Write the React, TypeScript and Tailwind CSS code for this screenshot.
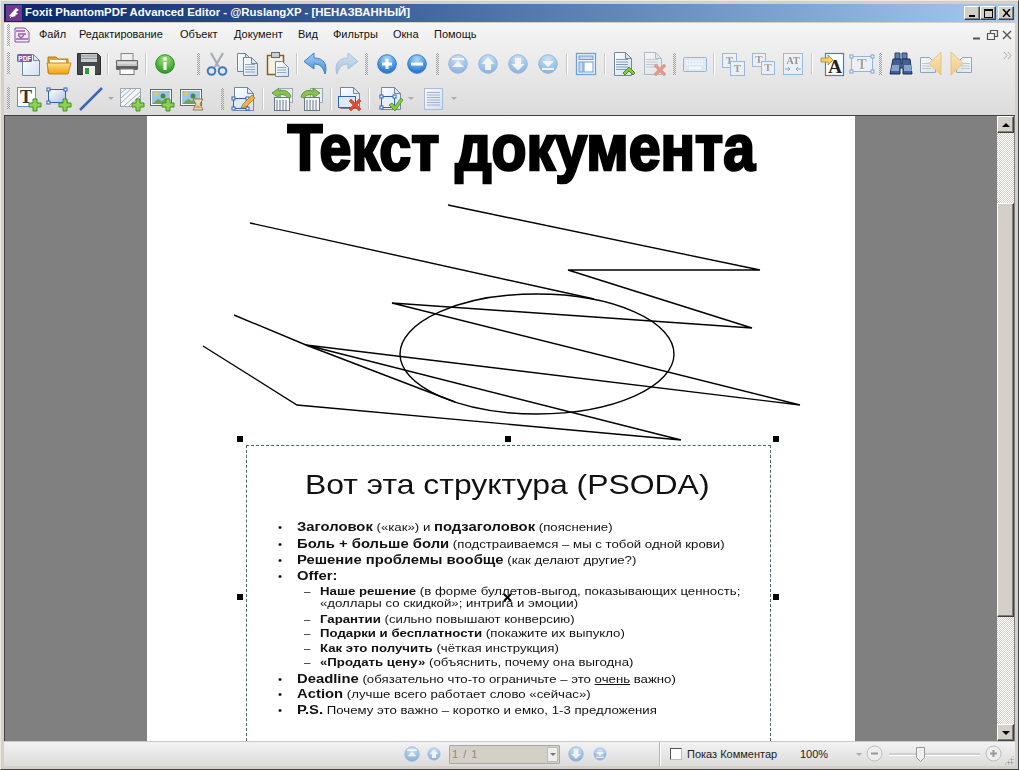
import React from "react";

const Defs = () => (
  <svg className="absolute w-0 h-0" aria-hidden="true">
    <defs>
      <radialGradient id="ball" cx="50%" cy="25%" r="80%"><stop offset="0" stopColor="#b5dcfb" /><stop offset="0.55" stopColor="#4d9be8" /><stop offset="1" stopColor="#1c62c4" /></radialGradient>
      <radialGradient id="gball" cx="50%" cy="25%" r="80%"><stop offset="0" stopColor="#a8e08a" /><stop offset="0.6" stopColor="#4fb33c" /><stop offset="1" stopColor="#2c8a24" /></radialGradient>
      <linearGradient id="page" x1="0" y1="0" x2="1" y2="1"><stop offset="0" stopColor="#ffffff" /><stop offset="1" stopColor="#cfe0f2" /></linearGradient>
      <linearGradient id="folder" x1="0" y1="0" x2="0" y2="1"><stop offset="0" stopColor="#ffe083" /><stop offset="1" stopColor="#ee9f12" /></linearGradient>
      <linearGradient id="arrow" x1="0" y1="0" x2="0" y2="1"><stop offset="0" stopColor="#a9d3f7" /><stop offset="1" stopColor="#3d86d6" /></linearGradient>
      <linearGradient id="rectf" x1="0" y1="0" x2="1" y2="1"><stop offset="0" stopColor="#ffffff" /><stop offset="1" stopColor="#a9c4e6" /></linearGradient>
      <linearGradient id="tri" x1="0" y1="0" x2="0" y2="1"><stop offset="0" stopColor="#fde6a8" /><stop offset="1" stopColor="#f2bd55" /></linearGradient>
    </defs>
  </svg>
);

type P = { children: React.ReactNode; w?: number; o?: string };
const S = ({ children, o = "" }: P) => (
  <svg width="26" height="26" viewBox="0 0 26 26" fill="none" className={o}>{children}</svg>
);

const DocShape = ({ x = 4, y = 2, w = 16, h = 21 }: { x?: number; y?: number; w?: number; h?: number }) => (
  <path d={`M${x + .5} ${y + .5}h${w - 6}l6 6v${h - 6}h-${w}z`} fill="url(#page)" stroke="#77879a" />
);
const Fold = ({ x = 4, y = 2, w = 16 }: { x?: number; y?: number; w?: number }) => (
  <path d={`M${x + w - 5.5} ${y + .5}v6h6z`} fill="#dfe6ee" stroke="#77879a" />
);
const Lines = ({ x = 7, y = 9, n = 5, w = 10, c = "#7f9cc0" }: { x?: number; y?: number; n?: number; w?: number; c?: string }) => (
  <g stroke={c}>
    {Array.from({ length: n }).map((_, i) => <path key={i} d={`M${x} ${y + i * 2.5 + .5}h${w}`} />)}
  </g>
);
const PlusG = ({ x = 18, y = 18 }: { x?: number; y?: number }) => (
  <path d={`M${x - 2} ${y - 6}h4v4h4v4h-4v4h-4v-4h-4v-4h4z`} fill="#8fd04f" stroke="#3f8f2a" />
);
const Ball = ({ g, faded }: { g: "plus" | "minus" | "first" | "up" | "down" | "last"; faded?: boolean }) => (
  <S o={faded ? "opacity-45" : ""}>
    <circle cx="13" cy="13" r="9.3" fill="url(#ball)" stroke="#3a7fd0" />
    {g === "plus" && <path d="M8 11.5h3.5V8h3v3.5H18v3h-3.5V18h-3v-3.5H8z" fill="#fff" />}
    {g === "minus" && <rect x="7" y="11.5" width="12" height="3" fill="#fff" />}
    {g === "first" && <path d="M7 7h12v2H7zM13 10l6 6H7z" fill="#fff" />}
    {g === "last" && <path d="M7 17h12v2H7zM13 16l-6-6h12z" fill="#fff" />}
    {g === "up" && <path d="M13 6.5l6.5 6.5H16v6h-6v-6H6.500z" fill="#fff" />}
    {g === "down" && <path d="M13 19.500L6.500 13H10V7h6v6h3.500z" fill="#fff" />}
  </S>
);

const NewPdf = () => (
  <svg width="26" height="26" viewBox="0 0 26 26" fill="none">
    <DocShape x={6} y={3} w={17} h={21} /><Fold x={6} y={3} w={17} />
    <rect x="1" y="3" width="15" height="8" rx="1.500" fill="#8a55a8" />
    <text x="2.300" y="9.500" fontSize="6.500" fontWeight="700" fill="#fff" fontFamily="Liberation Sans">PDF</text>
  </svg>
);
const Folder = () => (
  <S><path d="M2 6h8l2 2h10v14H2z" fill="#e9a321" stroke="#b97c10" /><path d="M4 9h16v4H4z" fill="#fff" /><path d="M1 12h24l-3 11H3z" fill="url(#folder)" stroke="#c58a15" /></S>
);
const Floppy = () => (
  <S><path d="M1.500 2.500h20l3 3v18h-23z" fill="#44484b" stroke="#2a2d30" /><rect x="5" y="3" width="16" height="8" fill="#c9ccce" /><path d="M5 5h16M5 7.500h16" stroke="#8f9599" /><rect x="7" y="15" width="12" height="9" fill="#eeeeea" /><rect x="9" y="17" width="4" height="6" fill="#2f9a3a" /></S>
);
const Printer = () => (
  <S><rect x="7" y="2.500" width="12" height="7" fill="#eef0f0" stroke="#888" /><path d="M2.500 9.500h21v9h-21z" fill="#c4c7c7" stroke="#666" /><rect x="3" y="15" width="20" height="3" fill="#5c6063" /><rect x="6" y="18" width="14" height="5.500" fill="#fff" stroke="#777" /><path d="M4 12h18" stroke="#eee" /></S>
);
const Info = () => (
  <S><circle cx="13" cy="13" r="9.300" fill="url(#gball)" stroke="#2f8a25" /><rect x="11.500" y="6.500" width="3" height="3" fill="#fff" /><rect x="11.500" y="11" width="3" height="8" fill="#fff" /></S>
);
const Scissors = () => (
  <svg width="26" height="26" viewBox="0 0 26 26" fill="none">
    <path d="M7 2l8 14M19 2L11 16" stroke="#a7adb4" strokeWidth="2.200" />
    <circle cx="7.500" cy="20" r="3.800" stroke="#3b7ac4" strokeWidth="2" /><circle cx="18.500" cy="20" r="3.800" stroke="#3b7ac4" strokeWidth="2" />
  </svg>
);
const Copy = () => (
  <S><DocShape x={3} y={2} w={14} h={18} /><Fold x={3} y={2} w={14} /><DocShape x={9} y={6} w={14} h={18} /><Fold x={9} y={6} w={14} /><Lines x={11} y={13} n={4} w={10} c="#93a7bd" /></S>
);
const Paste = () => (
  <S><rect x="3.500" y="4.500" width="16" height="19" fill="#f4f0e6" stroke="#8a5f1e" strokeWidth="1.500" /><rect x="7.500" y="1.500" width="8" height="5" fill="#c9ced2" stroke="#667" /><DocShape x={11} y={10} w={13} h={15} /><Lines x={13} y={16} n={3} w={9} c="#93a7bd" /></S>
);
const Undo = ({ flip, faded }: { flip?: boolean; faded?: boolean }) => (
  <S o={`${flip ? "-scale-x-100" : ""} ${faded ? "opacity-40" : ""}`}>
    <path d="M11 2L1 10.500 11 18v-5c6 0 9 3 11 10 3-9-1-16-11-16z" fill="url(#arrow)" stroke="#3e7fc7" />
  </S>
);
const Panel = () => (
  <S><rect x="3.500" y="2.500" width="19" height="21" fill="#f0f5fb" stroke="#6f9fd6" strokeWidth="1.300" /><rect x="6" y="5" width="14" height="3.500" fill="#c6d9ef" stroke="#6f9fd6" /><rect x="6" y="11" width="4" height="10" fill="#c6d9ef" stroke="#6f9fd6" /><rect x="11" y="11" width="9" height="10" fill="#fff" stroke="#6f9fd6" /></S>
);
const DocUp = () => (
  <S><DocShape x={3} y={1} w={17} h={23} /><Fold x={3} y={1} w={17} /><Lines x={5} y={8} n={5} w={12} /><path d="M12 22l6-6 6 6-2 2-4-4-4 4z" fill="#86c53f" stroke="#4e932a" /></S>
);
const RedX = ({ x = 18, y = 18 }: { x?: number; y?: number }) => (
  <path d={`M${x - 6} ${y - 4}l2-2 4 4 4-4 2 2-4 4 4 4-2 2-4-4-4 4-2-2 4-4z`} fill="#e64a2a" stroke="#b9300f" strokeWidth=".5" />
);
const DocX = () => (
  <S o="opacity-50"><DocShape x={3} y={1} w={17} h={22} /><Fold x={3} y={1} w={17} /><Lines x={5} y={8} n={4} w={12} c="#a0a8b4" /><RedX x={19} y={19} /></S>
);
const Keyboard = () => (
  <S o="opacity-70"><rect x="1.500" y="6.500" width="23" height="14" rx="1" fill="#dde8f4" stroke="#6f9fd6" /><path d="M4 10h18M4 13h18" stroke="#fff" strokeWidth="1.500" strokeDasharray="2 1" /><path d="M7 17h12" stroke="#fff" strokeWidth="2" /></S>
);
const TBox = ({ x, y, s = 14 }: { x: number; y: number; s?: number }) => (
  <g><rect x={x + .5} y={y + .5} width={s} height={s} fill="#eef3fa" stroke="#6f9fd6" />
    <text x={x + s / 2 + .5} y={y + s - 3} textAnchor="middle" fontSize="11" fontWeight="700" fill="#777" fontFamily="Liberation Serif">T</text></g>
);
const TT = () => (
  <S o="opacity-65"><TBox x={2} y={2} /><TBox x={10} y={10} /></S>
);
const TT2 = () => (
  <S o="opacity-65"><TBox x={2} y={2} s={13} /><TBox x={11} y={10} s={13} /></S>
);
const AT = () => (
  <S o="opacity-65"><rect x="3.500" y="2.500" width="19" height="21" fill="#eef3fa" stroke="#6f9fd6" />
    <text x="13" y="13" textAnchor="middle" fontSize="10" fontWeight="700" fill="#666" fontFamily="Liberation Serif">AT</text>
    <path d="M5 18h5M8 16l2 2-2 2M21 18h-5M18 16l-2 2 2 2" stroke="#4d86c9" /></S>
);
const AHi = () => (
  <svg width="26" height="26" viewBox="0 0 26 26" fill="none">
    <rect x="5.500" y="2.500" width="18" height="22" fill="#fff" stroke="#3d7fd0" strokeWidth="1.200" />
    <text x="15" y="22" textAnchor="middle" fontSize="19" fontWeight="700" fill="#222" fontFamily="Liberation Serif">A</text>
    <path d="M1 7h7V4l5 5-5 5v-3H1z" fill="#f6cf6a" stroke="#a8802c" strokeWidth=".8" />
  </svg>
);
const Handles = ({ pts, c = "#4d86c9" }: { pts: number[][]; c?: string }) => (
  <g>{pts.map((p, i) => <rect key={i} x={p[0] - 1.500} y={p[1] - 1.500} width="3" height="3" fill="#fff" stroke={c} />)}</g>
);
const TFrame = () => (
  <S o="opacity-70"><rect x="2.500" y="5.500" width="21" height="15" fill="#eef3fa" stroke="#6f9fd6" />
    <text x="13" y="18" textAnchor="middle" fontSize="14" fontWeight="700" fill="#888" fontFamily="Liberation Serif">T</text>
    <Handles pts={[[2.500, 5.500], [23.500, 5.500], [2.500, 20.500], [23.500, 20.500]]} /></S>
);
const Binoculars = () => (
  <S><path d="M7 2h5v6H7zM14 2h5v6h-5z" fill="#5f7fb0" stroke="#2c3f66" /><path d="M5 8h8v5h1V8h8l2 15h-9v-6h-3v6H2z" fill="#3f5f95" stroke="#1f2f55" /><path d="M4 14h7v6H3zM16 14h7l1 6h-8z" fill="#86a3cf" /></S>
);
const NavTri = ({ right }: { right?: boolean }) => (
  <S o={right ? "-scale-x-100 opacity-70" : "opacity-70"}><DocShape x={2} y={6} w={15} h={15} /><Lines x={4} y={12} n={3} w={9} c="#b0b8c4" /><path d="M23 1v23L11 12.500z" fill="url(#tri)" stroke="#e4b25d" /></S>
);
const TPlus = () => (
  <S><rect x="1.500" y="1.500" width="18" height="19" fill="#fff" stroke="#5d90cc" /><text x="10" y="17" textAnchor="middle" fontSize="18" fontWeight="700" fill="#333" fontFamily="Liberation Serif">T</text><PlusG x={19} y={19} /></S>
);
const RectPlus = () => (
  <S><rect x="2.500" y="3.500" width="17" height="13" fill="url(#rectf)" stroke="#2e62b4" /><Handles pts={[[2.500, 3.500], [19.500, 3.500], [2.500, 16.500], [19.500, 16.500]]} c="#2e62b4" /><PlusG x={19} y={19} /></S>
);
const LineI = () => (
  <S><path d="M2 24L24 2" stroke="#3a66b8" strokeWidth="2.500" /></S>
);
const HatchPlus = () => (
  <S><rect x="1.500" y="2.500" width="20" height="18" fill="#f3f5f8" stroke="#9aa8b8" /><path d="M2 7l5-4M2 12l10-9M2 17L17 3M5 20L21 6M10 20L21 10M15 20l6-5" stroke="#a5adb8" /><PlusG x={19} y={19} /></S>
);
const Pic = () => (
  <g><rect x="1.500" y="3.500" width="21" height="16" fill="#fff" stroke="#666" /><rect x="3" y="5" width="18" height="13" fill="#9cc5ee" /><path d="M3 18l6-5 4 2 4-3 4 3v3z" fill="#6aa84b" /><circle cx="7" cy="8" r="2" fill="#f4c842" /><circle cx="14" cy="10" r="2.500" fill="#4b8a36" /></g>
);
const PicPlus = () => <S><Pic /><PlusG x={19} y={19} /></S>;
const PicHour = () => (
  <S><Pic /><path d="M14 13h10l-3 5 3 6H14l3-6z" fill="#e8dcc0" stroke="#8a7a55" /><path d="M16 22h6l-3-3z" fill="#d9a13a" /></S>
);
const EditDoc = () => (
  <S><DocShape x={3} y={1} w={19} h={23} /><Fold x={3} y={1} w={19} /><rect x="2.500" y="12.500" width="14" height="10" fill="#dfeaf7" stroke="#2e62b4" /><Handles pts={[[2.500, 12.500], [16.500, 12.500], [2.500, 22.500], [16.500, 22.500]]} c="#2e62b4" /><path d="M10 22l2-4 9-9 3 3-9 9z" fill="#f1b14a" stroke="#9a6a20" strokeWidth=".7" /></S>
);
const ArrowOver = ({ flip }: { flip?: boolean }) => (
  <S>
    <rect x="11.500" y="2.500" width="12" height="14" fill="#e8ecf0" stroke="#9aa8b8" />
    <rect x="5.500" y="11.500" width="15" height="13" fill="#f6f8fa" stroke="#68788a" />
    <path d="M8 14v10M11 14v10M14 14v10M17 14v10" stroke="#68788a" />
    <path d={flip ? "M2 11c1-5 6-8 12-6V2l7 5-7 5V9c-4-1-7 0-9 3z" : "M22 11C21 6 16 3 10 5V2L3 7l7 5V9c4-1 7 0 9 3z"} fill="#8cc152" stroke="#4e8d28" strokeWidth=".8" />
  </S>
);
const DocRectX = () => (
  <S><DocShape x={3} y={1} w={19} h={21} /><Fold x={3} y={1} w={19} /><rect x="1.500" y="10.500" width="17" height="11" fill="#dfeaf7" stroke="#2e62b4" /><RedX x={18} y={19} /></S>
);
const DocCheck = () => (
  <S><DocShape x={3} y={1} w={19} h={22} /><Fold x={3} y={1} w={19} /><rect x="3.500" y="10.500" width="13" height="11" fill="#e6eef8" stroke="#2e62b4" /><Handles pts={[[3.500, 10.500], [16.500, 10.500], [3.500, 21.500], [16.500, 21.500]]} c="#2e62b4" /><path d="M11 19l3-2 3 3 6-8 2 2-8 11z" fill="#8cc83f" stroke="#4d8f25" strokeWidth=".8" /></S>
);
const LinesDoc = () => (
  <S o="opacity-80"><rect x="3.500" y="2.500" width="18" height="21" fill="url(#page)" stroke="#9db4d4" /><Lines x={6} y={6} n={6} w={13} c="#8fa8cc" /></S>
);

const Btn = ({ children }: { children: React.ReactNode }) => (
  <div className="w-[30px] h-[26px] flex items-center justify-center shrink-0">{children}</div>
);
const Sep = () => (
  <div className="w-[8px] flex justify-center shrink-0"><div className="w-[2px] h-[22px] bg-[#c9c9c9] border-r border-white" /></div>
);
const Grip = ({ cls = "w-[11px]" }: { cls?: string }) => (
  <div className={`${cls} flex justify-center shrink-0`}>
    <div className="w-[3px] h-[22px] bg-[repeating-conic-gradient(#a2a2a2_0_25%,transparent_0_50%)] bg-[length:2px_2px]" />
  </div>
);
const Dd = ({ cls = "w-[10px]" }: { cls?: string }) => (
  <div className={`${cls} flex justify-center shrink-0`}>
    <div className="w-0 h-0 border-x-[3px] border-x-transparent border-t-[3px] border-t-[#aaa]" />
  </div>
);

const Menu = () => {
  const items: [string, string][] = [["Файл", "w-[40px]"], ["Редактирование", "w-[101px]"], ["Объект", "w-[54px]"], ["Документ", "w-[64px]"], ["Вид", "w-[35px]"], ["Фильтры", "w-[60px]"], ["Окна", "w-[41px]"], ["Помощь", "w-[50px]"]];
  return (
    <div className="h-[23px] flex items-center pl-[3px] pr-[2px]">
      <Grip cls="w-[3px]" />
      <div className="w-[29px] flex justify-start pl-[4px] shrink-0">
        <svg width="16" height="16" viewBox="0 0 16 16" fill="none">
          <path d="M1 1h10l4 4v10H1z" fill="#f3e6f5" stroke="#8a4ea0" /><path d="M2 4h9M2 12h12M4 7h8" stroke="#9b5fb0" strokeWidth="1.500" /><path d="M4 8l3 3 3-3" stroke="#9b5fb0" strokeWidth="1.500" />
        </svg>
      </div>
      {items.map(([t, c]) => <div key={t} className={`${c} shrink-0 text-[11px] text-[#111] font-['Liberation_Sans',sans-serif]`}>{t}</div>)}
      <div className="ml-auto flex items-center gap-[6px]">
        <svg width="40" height="12" viewBox="0 0 40 12" fill="none" stroke="#555">
          <path d="M0 9.500h7" strokeWidth="2" />
          <path d="M14.500 4.500h7v6h-7zM17.500 4.500v-3h7v6h-3" strokeWidth="1.200" />
          <path d="M30 2l8 8M38 2l-8 8" strokeWidth="1.400" />
        </svg>
      </div>
    </div>
  );
};

const Toolbar1 = () => (
  <div className="h-[36px] flex items-center pl-[10px] relative">
    <div className="absolute left-[3px] top-[6px]"><Grip cls="w-[3px]" /></div>
    <Btn><NewPdf /></Btn><Btn><Folder /></Btn><Btn><Floppy /></Btn><Sep /><Btn><Printer /></Btn><Sep /><Btn><Info /></Btn>
    <div className="w-[14px] shrink-0" /><Grip cls="w-[8px]" />
    <Btn><Scissors /></Btn><Btn><Copy /></Btn><Btn><Paste /></Btn><div className="ml-[1px]"><Sep /></div><Btn><Undo /></Btn><Btn><Undo flip faded /></Btn><Grip />
    <Btn><Ball g="plus" /></Btn><Btn><Ball g="minus" /></Btn><Grip />
    <Btn><Ball g="first" faded /></Btn><Btn><Ball g="up" faded /></Btn><Btn><Ball g="down" faded /></Btn><Btn><Ball g="last" faded /></Btn><Sep />
    <Btn><Panel /></Btn><Sep /><Btn><DocUp /></Btn><Btn><DocX /></Btn><Grip />
    <Btn><Keyboard /></Btn><Sep /><Btn><TT /></Btn><Btn><TT2 /></Btn><Btn><AT /></Btn><Sep />
    <div className="ml-[2px]"><Btn><AHi /></Btn></div>
    <div className="w-[27px] flex justify-center shrink-0"><TFrame /></div><Grip />
    <Btn><Binoculars /></Btn><Btn><NavTri /></Btn><Btn><NavTri right /></Btn>
    <svg className="absolute right-[3px] top-[6px]" width="9" height="7" viewBox="0 0 9 7" fill="none" stroke="#aaa"><path d="M1 0l3 3.500L1 7M5 0l3 3.500L5 7" /></svg>
  </div>
);

const Toolbar2 = () => (
  <div className="h-[33px] flex items-center pl-[10px] relative">
    <div className="absolute left-[3px] top-[5px]"><Grip cls="w-[3px]" /></div>
    <Btn><TPlus /></Btn><Btn><RectPlus /></Btn><div className="ml-[2px]"><Btn><LineI /></Btn></div><Dd cls="w-[10px]" />
    <div className="ml-[1px]"><Btn><HatchPlus /></Btn></div><Btn><PicPlus /></Btn><Btn><PicHour /></Btn>
    <Grip cls="w-[22px] pl-[8px]" />
    <Btn><EditDoc /></Btn><Sep />
    <Btn><ArrowOver /></Btn><Btn><ArrowOver flip /></Btn><Sep /><Btn><DocRectX /></Btn><Sep />
    <div className="ml-[3px]"><Btn><DocCheck /></Btn></div><Dd />
    <div className="ml-[3px]"><Btn><LinesDoc /></Btn></div><Dd />
  </div>
);

const Bevel = ({ children, cls = "" }: { children?: React.ReactNode; cls?: string }) => (
  <div className={`bg-[#d4d0c8] border border-t-white border-l-white border-r-[#404040] border-b-[#404040] shadow-[inset_-1px_-1px_0_#808080] flex items-center justify-center shrink-0 ${cls}`}>{children}</div>
);

const Scrollbar = () => (
  <div className="w-[17px] shrink-0 flex flex-col">
    <Bevel cls="h-[17px]"><div className="w-0 h-0 border-x-[4px] border-x-transparent border-b-[4px] border-b-black" /></Bevel>
    <div className="h-[70px] bg-[repeating-conic-gradient(#d4d0c8_0_25%,#ffffff_0_50%)] bg-[length:2px_2px]" />
    <Bevel cls="h-[414px]" />
    <div className="flex-1 bg-[repeating-conic-gradient(#d4d0c8_0_25%,#ffffff_0_50%)] bg-[length:2px_2px]" />
    <Bevel cls="h-[17px]"><div className="w-0 h-0 border-x-[4px] border-x-transparent border-t-[4px] border-t-black" /></Bevel>
  </div>
);

const H = ({ cls }: { cls: string }) => <div className={`absolute w-[6px] h-[6px] bg-black ${cls}`} />;

const rows: { k: "b" | "d"; h: string; c: React.ReactNode }[] = [
  { k: "b", h: "h-[17px]", c: <><b>Заголовок</b> («как») и <b>подзаголовок</b> (пояснение)</> },
  { k: "b", h: "h-[16px]", c: <><b>Боль + больше боли</b> (подстраиваемся – мы с тобой одной крови)</> },
  { k: "b", h: "h-[16px]", c: <><b>Решение проблемы вообще</b> (как делают другие?)</> },
  { k: "b", h: "h-[16px]", c: <b>Offer:</b> },
  { k: "d", h: "h-[16px] -mt-[1px]", c: <><b>Наше решение</b> (в форме буллетов-выгод, показывающих ценность;</> },
  { k: "d", h: "h-[12px] -mt-[2px]", c: <>«доллары со скидкой»; интрига и эмоции)</> },
  { k: "d", h: "h-[16px] mt-[2px]", c: <><b>Гарантии</b> (сильно повышают конверсию)</> },
  { k: "d", h: "h-[14px] -mt-[1px]", c: <><b>Подарки и бесплатности</b> (покажите их выпукло)</> },
  { k: "d", h: "h-[15px] mt-[1px]", c: <><b>Как это получить</b> (чёткая инструкция)</> },
  { k: "d", h: "h-[14px] -mt-[1px]", c: <><b>«Продать цену»</b> (объяснить, почему она выгодна)</> },
  { k: "b", h: "h-[16px] mt-[2px]", c: <><b>Deadline</b> (обязательно что-то ограничьте – это <u>очень</u> важно)</> },
  { k: "b", h: "h-[15px]", c: <><b>Action</b> (лучше всего работает слово «сейчас»)</> },
  { k: "b", h: "h-[17px]", c: <><b>P.S.</b> Почему это важно – коротко и емко, 1-3 предложения</> },
];

const Page = () => (
  <div className="w-[708px] h-full bg-white shrink-0 flex flex-col font-['Liberation_Sans',sans-serif] relative">
    <div className="h-[81px] shrink-0 flex justify-center">
      <div className="ml-[40px] text-[64px] leading-[64px] font-bold text-black whitespace-nowrap scale-x-[0.895] [-webkit-text-stroke:2.6px_black]">Текст документа</div>
    </div>
    <svg width="708" height="248" viewBox="147 197 708 248" fill="none" stroke="#000" strokeWidth="1.400" className="shrink-0">
      <path d="M448 205L760 270H568L752 328 392 303 800 405 306 345 681 440 297 405 203 346" />
      <path d="M250 223L594 299M234 315L306 345 455 402" />
      <ellipse cx="537" cy="354" rx="137" ry="60" />
    </svg>
    <div className="relative ml-[99px] w-[525px] flex-1 border-t border-x border-dashed border-[#456a66]">
      <H cls="-left-[10px] -top-[10px]" /><H cls="left-[258px] -top-[10px]" /><H cls="-right-[9px] -top-[10px]" />
      <H cls="-left-[10px] top-[148px]" /><H cls="-right-[9px] top-[148px]" />
      <div className="blur-[0.35px] text-[#111]">
        <div className="pt-[23px] pl-[58px] h-[72px] text-[28px] leading-[32px] whitespace-nowrap"><div className="origin-left scale-x-[1.14]">Вот эта структура (PSODA)</div></div>
        <div className="leading-[13px] whitespace-nowrap">
          {rows.map((r, i) => (
            <div key={i} className={`${r.h} flex items-center ${r.k === "b" ? "pl-[31px] text-[11.6px] [&_b]:text-[13px]" : "pl-[57px] text-[11.6px]"}`}>
              <div className={`${r.k === "b" ? "w-[19px]" : "w-[16px]"} shrink-0`}>{r.k === "b" ? "•" : i === 5 ? "" : "–"}</div>
              <div className="origin-left scale-x-[1.14]">{r.c}</div>
            </div>
          ))}
        </div>
      </div>
      <svg className="absolute left-[256px] top-[147px]" width="9" height="9" viewBox="0 0 9 9" stroke="#000" strokeWidth="2"><path d="M1 1l7 7M8 1L1 8" /></svg>
    </div>
  </div>
);

const Status = () => (
  <div className="h-[25px] shrink-0 bg-gradient-to-b from-[#f2f2f2] to-[#dcdcdc] border-t border-[#c8c8c8] flex items-center pl-[396px] text-[11px] text-[#222] font-['Liberation_Sans',sans-serif] relative">
    <div className="w-[26px] flex justify-center -mx-[1px] scale-[0.78]"><Ball g="first" faded /></div>
    <div className="w-[22px] flex justify-center -mx-[1px] scale-[0.78]"><Ball g="up" faded /></div>
    <div className="w-[111px] h-[19px] ml-[5px] bg-[#d4d0c8] border border-[#a8a8a8] flex items-center justify-between pl-[2px] text-[#888] shrink-0 rounded-[1px]">
      <span className="tracking-[1px]">1 / 1</span>
      <div className="w-[11px] h-[15px] mr-[1px] bg-[#eeeeee] border border-[#bbb] flex items-center justify-center"><div className="w-0 h-0 border-x-[3px] border-x-transparent border-t-[3px] border-t-[#777]" /></div>
    </div>
    <div className="w-[26px] flex justify-center ml-[3px] scale-[0.78]"><Ball g="down" faded /></div>
    <div className="w-[22px] flex justify-center scale-[0.78]"><Ball g="last" faded /></div>
    <div className="ml-[48px] w-[1px] h-[24px] bg-[#b5b5b5] border-r border-white box-content" />
    <div className="ml-[9px] w-[12px] h-[12px] bg-white border border-[#555] border-r-[#bbb] border-b-[#bbb]" />
    <div className="ml-[5px] w-[113px] whitespace-nowrap">Показ Комментар</div>
    <div className="w-[55px]">100%</div>
    <Dd cls="w-[8px]" />
    <svg width="18" height="18" viewBox="0 0 18 18" fill="none" className="ml-[3px]"><circle cx="8.500" cy="8.500" r="7.500" fill="#eee" stroke="#bbb" /><path d="M5 8.500h7" stroke="#999" strokeWidth="2" /></svg>
    <div className="ml-[5px] w-[91px] h-[3px] bg-[#cfcfcf] border-b border-white relative">
      <svg className="absolute left-[26px] -top-[6px]" width="11" height="16" viewBox="0 0 11 16" fill="none"><path d="M1.500 .5h8v10l-4 4-4-4z" fill="#f0f0f0" stroke="#999" /></svg>
    </div>
    <svg width="18" height="18" viewBox="0 0 18 18" fill="none" className="ml-[5px]"><circle cx="8.500" cy="8.500" r="7.500" fill="#eee" stroke="#bbb" /><path d="M5 8.500h7M8.500 5v7" stroke="#999" strokeWidth="2" /></svg>
    <div className="absolute right-[1px] bottom-[1px] w-[10px] h-[10px] bg-[radial-gradient(#999_45%,transparent_50%)] bg-[length:3px_3px] [clip-path:polygon(100%_0,100%_100%,0_100%)]" />
  </div>
);

export default function App() {
  return (
    <div className="w-[1019px] h-[770px] bg-[#d4d0c8] border border-t-[#ece9e1] border-l-[#ece9e1] border-r-[#404040] border-b-[#404040] p-[3px] flex flex-col relative font-['Liberation_Sans',sans-serif]">
      <Defs />
      <div className="h-[18px] shrink-0 bg-gradient-to-r from-[#0a246a] to-[#a6caf0] flex items-center pl-[2px] pr-[1px] text-white">
        <svg width="16" height="16" viewBox="0 0 16 16" className="shrink-0"><rect width="16" height="16" fill="#6d3a8e" /><path d="M3 11l7-8 3 2-3 2 2 2-3 1 1 1-4 1z" fill="#fff" /><path d="M4 13l2-2" stroke="#ddd" /></svg>
        <div className="ml-[3px] text-[11.400px] font-bold whitespace-nowrap font-['Liberation_Sans',sans-serif]">Foxit PhantomPDF Advanced Editor - @RuslangXP - [НЕНАЗВАННЫЙ]</div>
        <div className="ml-auto flex">
          <Bevel cls="w-[16px] h-[14px] items-end pb-[2px]"><div className="w-[6px] h-[2px] bg-black" /></Bevel>
          <Bevel cls="w-[16px] h-[14px]"><div className="w-[9px] h-[9px] border border-black border-t-2" /></Bevel>
          <Bevel cls="w-[16px] h-[14px] ml-[2px]"><svg width="9" height="8" viewBox="0 0 9 8" stroke="#000" strokeWidth="1.500"><path d="M1 0l7 8M8 0L1 8" /></svg></Bevel>
        </div>
      </div>
      <div className="h-[92px] mt-[1px] shrink-0 bg-gradient-to-b from-[#f5f5f5] to-[#dcdcdc] relative z-10">
        <Menu /><Toolbar1 /><Toolbar2 />
      </div>
      <div className="flex-1 min-h-0 flex border-t border-l border-[#404040] bg-[#808080]">
        <div className="flex-1 flex justify-center"><Page /></div>
        <div className="mr-[1px] flex"><Scrollbar /></div>
      </div>
      <Status />
    </div>
  );
}
